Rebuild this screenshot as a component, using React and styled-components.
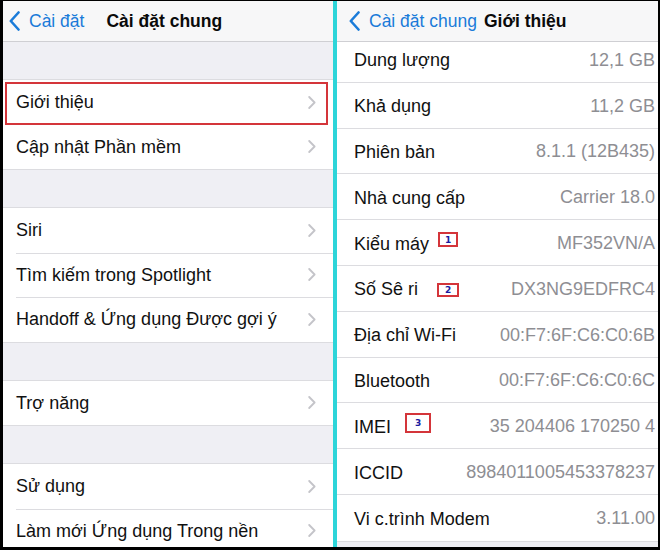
import React from 'react'
import styled, { createGlobalStyle } from 'styled-components'

const GlobalStyle = createGlobalStyle`
  html, body {
    margin: 0;
    padding: 0;
    background: #000;
  }
  body {
    font-family: "Liberation Sans", Arial, sans-serif;
    -webkit-font-smoothing: antialiased;
  }
`

const BackChevron = () => (
  <svg width="11" height="20" viewBox="0 0 11 20">
    <path d="M9.5 1.5 L1.8 10 L9.5 18.5" fill="none" stroke="#1a7bd9" strokeWidth="2.6" strokeLinecap="round" strokeLinejoin="round" />
  </svg>
)

const RowChevron = () => (
  <svg width="8" height="13" viewBox="0 0 8 13">
    <path d="M1.2 1 L6.6 6.5 L1.2 12" fill="none" stroke="#c4c4c9" strokeWidth="1.8" strokeLinecap="round" strokeLinejoin="round" />
  </svg>
)

const leftGroups = [
  [{ label: 'Giới thiệu', marked: true }, { label: 'Cập nhật Phần mềm' }],
  [{ label: 'Siri' }, { label: 'Tìm kiếm trong Spotlight' }, { label: 'Handoff & Ứng dụng Được gợi ý' }],
  [{ label: 'Trợ năng' }],
  [{ label: 'Sử dụng' }, { label: 'Làm mới Ứng dụng Trong nền' }],
]

const aboutRows = [
  { label: 'Dung lượng', value: '12,1 GB' },
  { label: 'Khả dụng', value: '11,2 GB' },
  { label: 'Phiên bản', value: '8.1.1 (12B435)' },
  { label: 'Nhà cung cấp', value: 'Carrier 18.0' },
  { label: 'Kiểu máy', value: 'MF352VN/A', badge: { n: 1, w: 20, h: 15, gap: 9, dy: -4 } },
  { label: 'Số Sê ri', value: 'DX3NG9EDFRC4', badge: { n: 2, w: 22, h: 14, gap: 19, dy: 1 } },
  { label: 'Địa chỉ Wi-Fi', value: '00:F7:6F:C6:C0:6B' },
  { label: 'Bluetooth', value: '00:F7:6F:C6:C0:6C' },
  { label: 'IMEI', value: '35 204406 170250 4', badge: { n: 3, w: 26, h: 20, gap: 14, dy: -4 } },
  { label: 'ICCID', value: '8984011005453378237' },
  { label: 'Vi c.trình Modem', value: '3.11.00' },
]

function App() {
  return (
    <>
      <GlobalStyle />
      <Frame>
        <Panel $width="330px">
          <NavBar>
            <BackButton>
              <BackChevron />
              <span>Cài đặt</span>
            </BackButton>
            <NavTitle $gap="22px">Cài đặt chung</NavTitle>
          </NavBar>
          <Body>
            {leftGroups.map((group, i) => (
              <Group key={i}>
                {group.map((item) => (
                  <LinkRow key={item.label} $marked={item.marked}>
                    <Label>{item.label}</Label>
                    <ChevronSlot>
                      <RowChevron />
                    </ChevronSlot>
                  </LinkRow>
                ))}
              </Group>
            ))}
          </Body>
        </Panel>
        <Divider />
        <Panel>
          <NavBar>
            <BackButton $pad="12px">
              <BackChevron />
              <span>Cài đặt chung</span>
            </BackButton>
            <NavTitle $gap="7px">Giới thiệu</NavTitle>
          </NavBar>
          <Body>
            <InfoList>
              {aboutRows.map((row) => (
                <InfoRow key={row.label}>
                  <Label>{row.label}</Label>
                  {row.badge && (
                    <Badge $w={row.badge.w} $h={row.badge.h} $gap={row.badge.gap} $dy={row.badge.dy}>
                      {row.badge.n}
                    </Badge>
                  )}
                  <Value>{row.value}</Value>
                </InfoRow>
              ))}
            </InfoList>
          </Body>
        </Panel>
      </Frame>
    </>
  )
}

export default App

const Frame = styled.div`
  width: 660px;
  height: 550px;
  box-sizing: border-box;
  padding: 1px 2px 3px 3px;
  display: flex;
  background: #000;
`

const Panel = styled.div`
  flex: ${p => (p.$width ? `0 0 ${p.$width}` : '1 1 auto')};
  min-width: 0;
  display: flex;
  flex-direction: column;
  background: #efeff4;
  overflow: hidden;
`

const Divider = styled.div`
  flex: 0 0 4px;
  background: #2dd5d9;
`

const NavBar = styled.div`
  height: 40px;
  flex: none;
  display: flex;
  align-items: center;
  background: #f7f7f8;
  border-bottom: 1px solid #cfcfd3;
  position: relative;
  z-index: 1;
`

const BackButton = styled.div`
  display: flex;
  align-items: center;
  gap: 9px;
  padding-left: ${p => p.$pad || '6px'};
  color: #1a7bd9;
  font-size: 17.5px;
  white-space: nowrap;
`

const NavTitle = styled.div`
  margin-left: ${p => p.$gap};
  font-size: 17.5px;
  font-weight: bold;
  color: #0a0a0a;
  white-space: nowrap;
`

const Body = styled.div`
  flex: 1;
  overflow: hidden;
`

const Group = styled.div`
  margin-top: 37px;
  background: #fff;
  border-top: 1px solid #dcdce0;
  border-bottom: 1px solid #dcdce0;
`

const LinkRow = styled.div`
  height: 44.5px;
  display: flex;
  align-items: center;
  padding: 0 17px 0 13px;
  position: relative;

  & + &::after {
    content: '';
    position: absolute;
    top: 0;
    left: 13px;
    right: 0;
    border-top: 1px solid #dcdce0;
  }

  ${p => p.$marked && `
    &::before {
      content: '';
      position: absolute;
      top: 2px;
      left: 2px;
      right: 5px;
      bottom: 0;
      border: 2px solid #d4353a;
      z-index: 1;
    }
  `}
`

const Label = styled.span`
  font-size: 18px;
  color: #111;
  white-space: nowrap;
  padding-top: 1px;
`

const ChevronSlot = styled.span`
  margin-left: auto;
  display: flex;
  align-items: center;
`

const InfoList = styled.div`
  margin-top: -5px;
  background: #fff;
  border-bottom: 1px solid #dcdce0;
`

const InfoRow = styled.div`
  height: 45.8px;
  box-sizing: border-box;
  display: flex;
  align-items: center;
  padding: 2px 3px 0 17px;
  border-bottom: 1px solid #dcdce0;

  &:last-child {
    border-bottom: none;
  }
`

const Value = styled.span`
  margin-left: auto;
  font-size: 18px;
  color: #8e8e93;
  white-space: nowrap;
`

const Badge = styled.span`
  width: ${p => p.$w}px;
  height: ${p => p.$h}px;
  box-sizing: border-box;
  margin-left: ${p => p.$gap}px;
  position: relative;
  top: ${p => p.$dy}px;
  display: flex;
  align-items: center;
  justify-content: center;
  border: 2px solid #d4353a;
  background: #fff;
  color: #1a1aa0;
  font-family: "DejaVu Sans", sans-serif;
  font-size: 9px;
  font-weight: bold;
`
